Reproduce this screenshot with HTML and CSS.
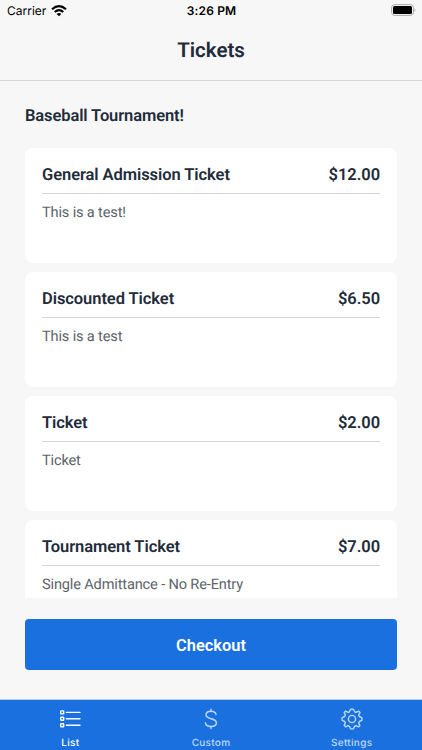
FILE: index.html
```html
<!DOCTYPE html>
<html lang="en">
<head>
<meta charset="utf-8">
<title>Tickets</title>
<link rel="stylesheet" href="styles.css">
</head>
<body>
<div class="status">
  <div class="carrier"><span>Carrier</span>
    <svg class="wifi" width="16" height="12" viewBox="0 0 16 12"><path d="M1 4.3Q8-2 15 4.3" fill="none" stroke="#000" stroke-width="2.2"/><path d="M3.7 7Q8 3.2 12.3 7" fill="none" stroke="#000" stroke-width="2"/><path d="M5.6 8.9Q8 7 10.4 8.9L8 11.3Z"/></svg>
  </div>
  <time>3:26 PM</time>
  <svg class="battery" width="25" height="12" viewBox="0 0 25 12"><rect x=".6" y=".6" width="21.8" height="10.8" rx="3" fill="none" stroke="#aaa"/><rect x="2" y="2" width="19" height="8" rx="1.5"/><path d="M23.6 4q1.6 2 0 4z" fill="#999"/></svg>
</div>
<header class="header"><h1>Tickets</h1></header>
<main class="content">
  <h2>Baseball Tournament!</h2>
  <div class="list">
    <article class="card"><div class="row"><h3>General Admission Ticket</h3><span>$12.00</span></div><p>This is a test!</p></article>
    <article class="card"><div class="row"><h3>Discounted Ticket</h3><span>$6.50</span></div><p>This is a test</p></article>
    <article class="card"><div class="row"><h3>Ticket</h3><span>$2.00</span></div><p>Ticket</p></article>
    <article class="card"><div class="row"><h3>Tournament Ticket</h3><span>$7.00</span></div><p>Single Admittance - No Re-Entry</p></article>
  </div>
  <button class="checkout">Checkout</button>
</main>
<nav class="tabs">
  <a class="tab active">
    <svg width="24" height="24" viewBox="0 0 24 24" fill="none" stroke="currentColor" stroke-width="1.4"><rect x="2.7" y="3.9" width="3" height="3" rx=".5"/><rect x="2.7" y="10.3" width="3" height="3" rx=".5"/><rect x="2.7" y="16.7" width="3" height="3" rx=".5"/><path d="M8.4 5.4H22M8.4 11.8H22M8.4 18.2H22" stroke-linecap="round"/></svg>
    <span>List</span>
  </a>
  <a class="tab">
    <svg width="24" height="24" viewBox="0 0 24 24" fill="none" stroke="currentColor" stroke-width="1.4" stroke-linecap="round"><path d="M12 2.2V4.2M12 19.5V21.5M17 7.5C16.7 5.4 14.9 4.2 12 4.2C9 4.2 7 5.6 7 7.8C7 10.1 8.7 10.9 12 11.7C15.5 12.5 17.4 13.4 17.4 15.8C17.4 18.2 15.3 19.5 12 19.5C8.8 19.5 6.7 18.2 6.4 15.9"/></svg>
    <span>Custom</span>
  </a>
  <a class="tab">
    <svg width="24" height="24" viewBox="0 0 24 24" fill="none" stroke="currentColor" stroke-width="1.4" stroke-linejoin="round"><circle cx="12" cy="12" r="3.6"/><path d="M10.6 2.3Q12 1.8 13.4 2.3L14.7 4.8Q15.4 5.2 16.1 5.3L18.6 4.2Q19.5 4.8 20 5.7L18.7 7.9Q18.9 8.8 19.3 9.5L21.8 10.6Q22.2 12 21.8 13.4L19.3 14.5Q18.8 15.3 18.7 16.1L19.8 18.5Q19.2 19.4 18.4 19.8L16.1 18.7Q15.2 18.9 14.6 19.3L13.4 21.7Q12 22.2 10.6 21.7L9.4 19.3Q8.7 18.8 7.9 18.7L5.6 19.8Q4.7 19.2 4.2 18.4L5.3 16.1Q5.2 15.2 4.7 14.5L2.2 13.4Q1.8 12 2.2 10.6L4.7 9.5Q5.2 8.7 5.3 7.9L4.2 5.6Q4.8 4.7 5.6 4.2L7.9 5.3Q8.8 5.2 9.4 4.8Z"/></svg>
    <span>Settings</span>
  </a>
</nav>
</body>
</html>
```
FILE: styles.css
```css
* { box-sizing: border-box; margin: 0; }
body {
  width: 422px;
  height: 750px;
  overflow: hidden;
  display: flex;
  flex-direction: column;
  background: #f7f7f7;
  color: #222b3a;
  font-family: Roboto, sans-serif;
  text-rendering: geometricPrecision;
}
.status {
  height: 22px;
  padding: 0 6px 0 7px;
  display: grid;
  grid-template-columns: 1fr auto 1fr;
  align-items: center;
  color: #000;
  font: 12px/22px Inter, sans-serif;
}
.status time { font-weight: 600; letter-spacing: .15px; }
.carrier { display: flex; align-items: center; gap: 5px; }
.wifi { display: block; }
.battery { justify-self: end; margin-top: -2px; }
.header {
  height: 59px;
  border-bottom: 1px solid #d5d6d8;
  text-align: center;
}
h1 { font-size: 20.5px; line-height: 58px; font-weight: 600; }
.content { flex: 1; min-height: 0; padding: 0 25px; }
h2 { padding-top: 24px; font-size: 16.5px; letter-spacing: -.11px; line-height: 24.5px; font-weight: 600; }
.list {
  height: 451px;
  margin-top: 17.5px;
  padding-top: .5px;
  overflow: hidden;
}
.card {
  height: 115px;
  margin-bottom: 9.2px;
  padding: 13px 17px 0;
  border-radius: 8px;
  background: #fff;
}
.row {
  height: 33px;
  display: flex;
  justify-content: space-between;
  border-bottom: 1px solid #d3d5d8;
  font-size: 16.5px;
  letter-spacing: -.07px;
  line-height: 29px;
  font-weight: 600;
}
h3 { font: inherit; }
p { padding-top: 7px; font-size: 14.6px; letter-spacing: -.16px; line-height: 22.5px; color: #5d636b; }
.checkout {
  display: block;
  width: 100%;
  height: 51px;
  margin-top: 21px;
  padding: 1px 0 0;
  border: 0;
  border-radius: 4px;
  background: #1b70e0;
  color: #fff;
  font: 600 16.4px/51px Roboto, sans-serif;
}
.tabs {
  height: 51px;
  display: flex;
  border-top: 1px solid #b9cbe4;
  background: #1b70e0;
}
.tab {
  flex: 1;
  display: flex;
  flex-direction: column;
  align-items: center;
  padding-top: 7px;
  color: #bfdaff;
  font: 500 10px/14px Inter, sans-serif;
  letter-spacing: .3px;
}
.tab svg { display: block; }
.tab span { margin-top: 5px; }
.active { color: #fff; }
```
